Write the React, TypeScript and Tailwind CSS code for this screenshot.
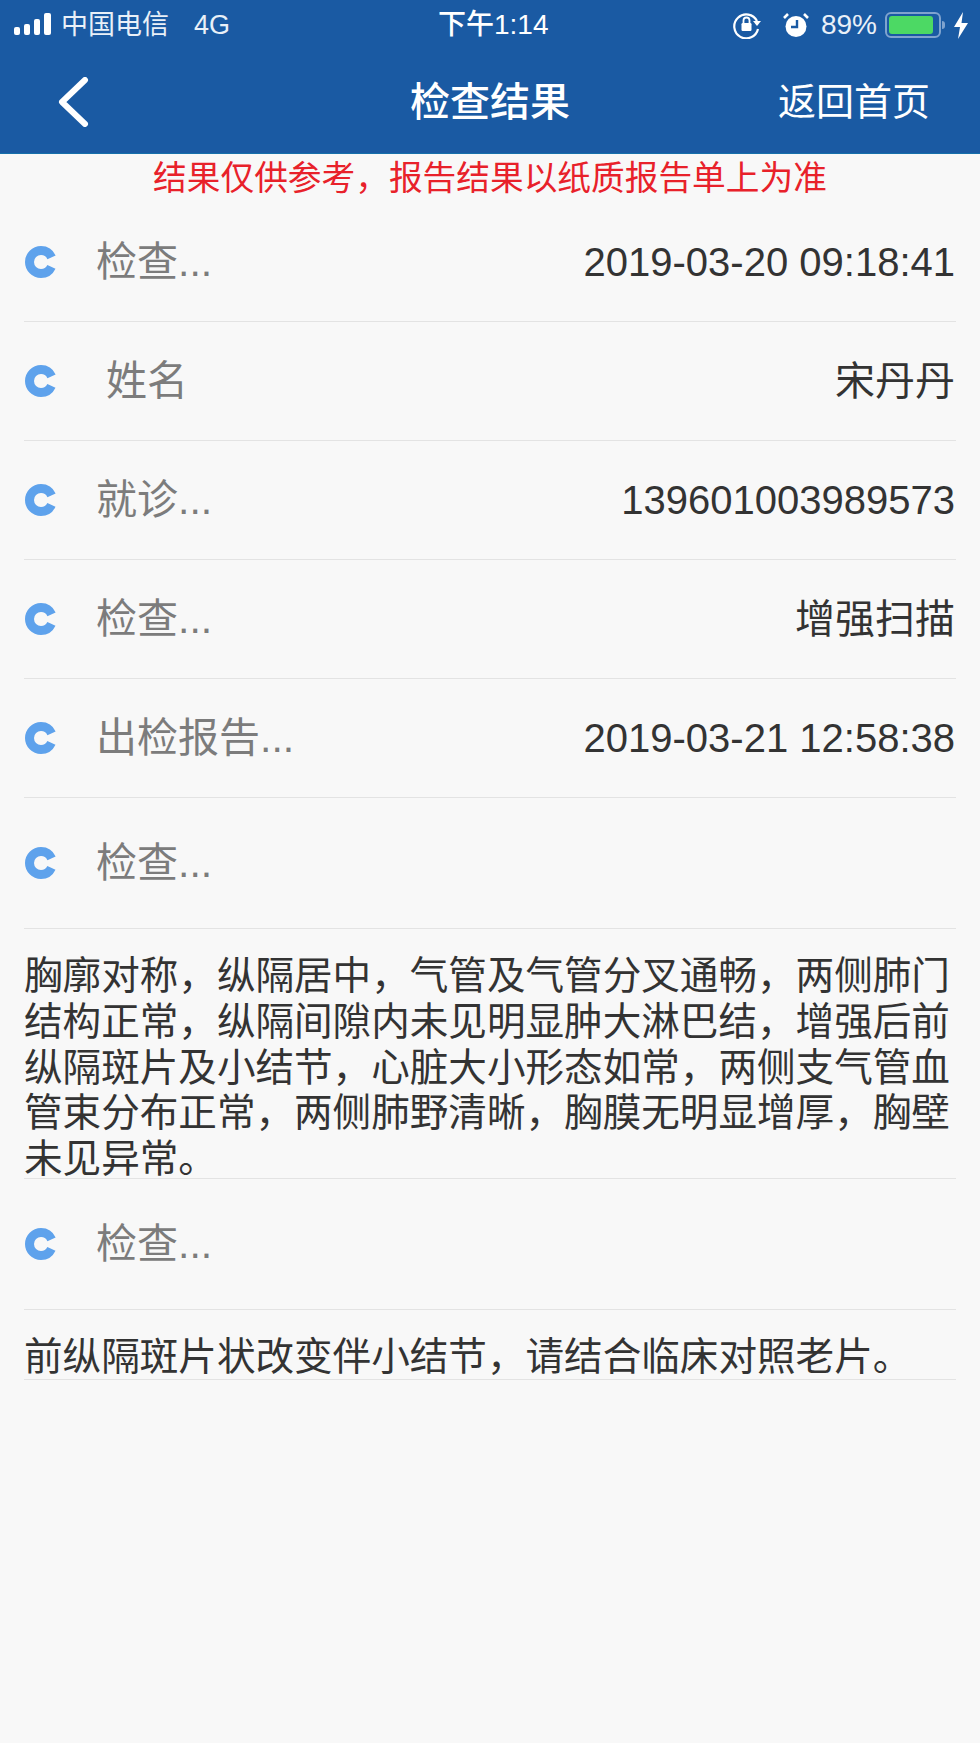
const cjk = "font-['Liberation_Sans','Noto_Sans_CJK_SC',sans-serif]";

function Spinner() {
  return (
    <svg width="34" height="34" viewBox="0 0 34 34" className="shrink-0">
      <circle cx="17" cy="17" r="11.5" fill="none" stroke="#5ea2ec" strokeWidth="9" strokeDasharray="62 10.3" strokeDashoffset="-5" />
    </svg>
  );
}

function Row({ label, value, tall, indent }: { label: string; value?: string; tall?: boolean; indent?: boolean }) {
  return (
    <div className={`flex items-center ${tall ? "h-[131px]" : "h-[119px]"} mx-6 border-b border-[#e3e3e3]`}>
      <Spinner />
      <span className={`${indent ? "ml-[48px]" : "ml-[38px]"} text-[41px] text-[#7c7c7c] leading-none`}>{label}</span>
      {value && <span className="ml-auto text-[40px] text-[#333333] leading-none pr-[1px]">{value}</span>}
    </div>
  );
}

function Signal() {
  return (
    <svg width="38" height="24" viewBox="0 0 38 24">
      <rect x="0" y="14" width="6" height="8" rx="2" fill="#fff" />
      <rect x="10" y="11" width="6" height="11" rx="2" fill="#fff" />
      <rect x="20" y="6" width="6" height="16" rx="2" fill="#fff" />
      <rect x="30" y="0" width="7" height="22" rx="2" fill="#fff" />
    </svg>
  );
}

function RotationLock() {
  return (
    <svg width="28" height="28" viewBox="0 0 28 28" fill="none">
      <path d="M24 10A12 12 0 1 0 25 18" stroke="#fff" strokeWidth="2.2" />
      <path d="M20 10h8l-4 5z" fill="#fff" />
      <rect x="8.5" y="12" width="10" height="8" rx="1.2" fill="#fff" />
      <path d="M10.5 12V9.5a3 3 0 0 1 6 0V12" stroke="#fff" strokeWidth="1.8" />
    </svg>
  );
}

function Alarm() {
  return (
    <svg width="26" height="26" viewBox="0 0 26 26">
      <circle cx="13" cy="14.5" r="10.5" fill="#fff" />
      <path d="M1 6l4-4M25 6l-4-4" stroke="#fff" strokeWidth="2.6" />
      <path d="M14 8v7H8" stroke="#1a5aa3" strokeWidth="2.4" fill="none" />
    </svg>
  );
}

function Battery() {
  return (
    <div className="flex items-center">
      <div className="w-[56px] h-[26px] rounded-[6px] border-2 border-[#7fa3cf] p-[2px]">
        <div className="w-[44px] h-full rounded-[3px] bg-[#4cd964]" />
      </div>
      <div className="w-[3px] h-[8px] ml-[1px] rounded-r-sm bg-[#7fa3cf]" />
    </div>
  );
}

function Bolt() {
  return (
    <svg width="16" height="27" viewBox="0 0 16 27">
      <path d="M10 0L1 15h6l-2 12L15 11H8.5z" fill="#fff" />
    </svg>
  );
}

export default function App() {
  return (
    <div className={`${cjk} w-[980px] h-[1743px] bg-[#f8f8f8] overflow-hidden`}>
      <header className="h-[154px] bg-[#1a5aa3] text-white flex flex-col border-b border-[#1670ab]">
        <div className="h-[50px] pl-[14px] pr-[11px] flex items-center justify-between relative">
          <div className="flex items-center text-[27px] leading-none text-[#e9f0f8]">
            <Signal />
            <span className="ml-[9px]">中国电信</span>
            <span className="ml-[25px]">4G</span>
          </div>
          <div className="absolute left-[438px] text-[28px] leading-none font-medium">下午1:14</div>
          <div className="flex items-center text-[28px] leading-none text-[#e9f0f8]">
            <RotationLock />
            <span className="w-[22px]" />
            <Alarm />
            <span className="ml-[12px]">89%</span>
            <span className="w-[8px]" />
            <Battery />
            <span className="w-[8px]" />
            <Bolt />
          </div>
        </div>
        <div className="flex-1 flex items-center relative">
          <svg width="34" height="50" viewBox="0 0 34 50" className="ml-[57px]" fill="none">
            <path d="M28 3L5 25l23 22" stroke="#fff" strokeWidth="6" strokeLinecap="round" strokeLinejoin="round" />
          </svg>
          <div className="absolute left-0 right-0 text-center text-[40px] font-medium leading-none">检查结果</div>
          <div className="ml-auto mr-[50px] text-[38px] leading-none">返回首页</div>
        </div>
      </header>
      <div className="h-[49px] flex items-center justify-center text-[33.7px] text-[#e8212a] leading-none">
        结果仅供参考，报告结果以纸质报告单上为准
      </div>
      <Row label="检查..." value="2019-03-20 09:18:41" />
      <Row label="姓名" value="宋丹丹" indent />
      <Row label="就诊..." value="139601003989573" />
      <Row label="检查..." value="增强扫描" />
      <Row label="出检报告..." value="2019-03-21 12:58:38" />
      <Row label="检查..." tall />
      <div className="mx-6 h-[250px] pt-[24px] border-b border-[#e3e3e3] text-[38.6px] leading-[45.8px] text-[#333333]">
        胸廓对称，纵隔居中，气管及气管分叉通畅，两侧肺门结构正常，纵隔间隙内未见明显肿大淋巴结，增强后前纵隔斑片及小结节，心脏大小形态如常，两侧支气管血管束分布正常，两侧肺野清晰，胸膜无明显增厚，胸壁未见异常。
      </div>
      <Row label="检查..." tall />
      <div className="mx-6 h-[70px] pt-[24px] border-b border-[#e3e3e3] text-[38.6px] leading-[45.8px] text-[#333333] whitespace-nowrap">
        前纵隔斑片状改变伴小结节，请结合临床对照老片。
      </div>
    </div>
  );
}
